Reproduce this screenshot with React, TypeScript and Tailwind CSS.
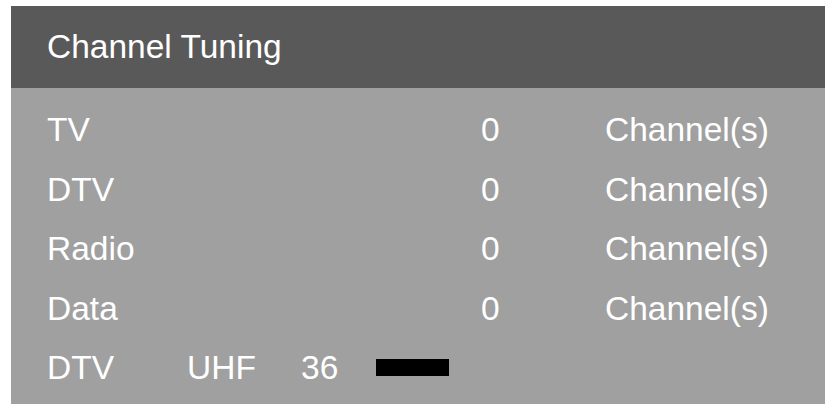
import React from "react";

const rows = [
  { name: "TV", count: 0 },
  { name: "DTV", count: 0 },
  { name: "Radio", count: 0 },
  { name: "Data", count: 0 },
];

export default function App() {
  return (
    <div
      className="w-[829px] h-[408px] bg-white pt-[6px] pl-[11px]"
      style={{ fontFamily: '"Liberation Sans", Arial, sans-serif' }}
    >
      <div className="w-[814px] h-[398px] flex flex-col text-white text-[33.5px]">
        {/* Header */}
        <div className="h-[82px] bg-[#5a5959] flex items-center pl-9">
          <span className="leading-none">Channel Tuning</span>
        </div>

        {/* Body */}
        <div className="flex-1 bg-[#a0a0a0] pt-3 pl-9">
          {rows.map((r) => (
            <div key={r.name} className="flex h-[59.5px] items-center leading-none">
              <span className="w-[434px]">{r.name}</span>
              <span className="w-[124px]">{r.count}</span>
              <span>Channel(s)</span>
            </div>
          ))}
          <div className="flex h-[59.5px] items-center leading-none">
            <span className="w-[140px]">DTV</span>
            <span className="w-[114px]">UHF</span>
            <span className="w-[75px]">36</span>
            <div className="w-[73px] h-[17px] bg-black" />
          </div>
        </div>
      </div>
    </div>
  );
}
